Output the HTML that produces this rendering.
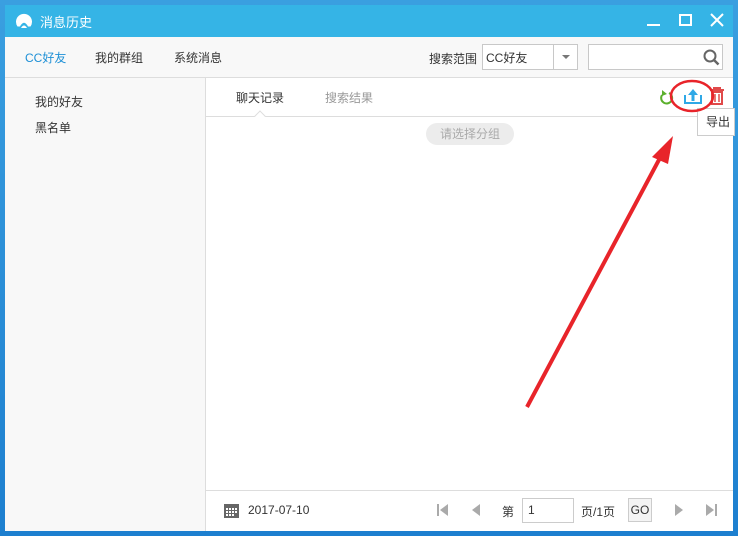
<!DOCTYPE html>
<html><head><meta charset="utf-8"><style>
*{margin:0;padding:0;box-sizing:border-box}
body{width:738px;height:536px;position:relative;overflow:hidden;background:#2a8fd6;font-family:"Liberation Sans","Noto Sans CJK SC",sans-serif;font-size:12px;color:#333}
.a{position:absolute}
</style></head><body>
<div class="a" style="left:0;top:0;width:738px;height:536px;background:linear-gradient(#3a9fe0,#1d7fcf)"></div>
<div class="a" style="left:5px;top:5px;width:728px;height:526px;background:#35b4e6"></div>
<!-- title -->
<svg class="a" style="left:14px;top:11px" width="20" height="20" viewBox="0 0 20 20"><path d="M3.5 15.5 A8 8 0 1 1 16.5 15.5 L14 15.5 Q10 8 6 15.5Z" fill="#fff"/><path d="M7 17 Q10 12 13 17Z" fill="#fff"/></svg>
<div class="a" style="left:40px;top:12px;color:#fff;font-size:13px">消息历史</div>
<div class="a" style="left:647px;top:24px;width:13px;height:2px;background:#fff"></div>
<div class="a" style="left:679px;top:14px;width:13px;height:12px;border:2px solid #fff"></div>
<svg class="a" style="left:710px;top:13px" width="14" height="14"><path d="M1 1L13 13M13 1L1 13" stroke="#fff" stroke-width="2"/></svg>
<!-- nav -->
<div class="a" style="left:5px;top:37px;width:728px;height:494px;background:#f8f8f8"></div>
<div class="a" style="left:25px;top:49px;color:#1e90d6">CC好友</div>
<div class="a" style="left:95px;top:49px">我的群组</div>
<div class="a" style="left:174px;top:49px">系统消息</div>
<div class="a" style="left:429px;top:50px">搜索范围</div>
<div class="a" style="left:482px;top:44px;width:96px;height:26px;border:1px solid #c8c8c8;background:#fff"></div>
<div class="a" style="left:486px;top:49px">CC好友</div>
<div class="a" style="left:553px;top:45px;width:1px;height:24px;background:#c8c8c8"></div>
<div class="a" style="left:562px;top:55px;border:4px solid transparent;border-top:4px solid #777"></div>
<div class="a" style="left:588px;top:44px;width:135px;height:26px;border:1px solid #c8c8c8;background:#fff"></div>
<svg class="a" style="left:703px;top:49px" width="17" height="17"><circle cx="7" cy="7" r="5.5" fill="none" stroke="#666" stroke-width="2"/><path d="M11 11L15.5 15.5" stroke="#666" stroke-width="2.5"/></svg>
<div class="a" style="left:5px;top:77px;width:728px;height:1px;background:#ddd"></div>
<!-- left -->
<div class="a" style="left:35px;top:93px">我的好友</div>
<div class="a" style="left:35px;top:119px">黑名单</div>
<div class="a" style="left:205px;top:78px;width:1px;height:453px;background:#ddd"></div>
<!-- right -->
<div class="a" style="left:206px;top:78px;width:527px;height:453px;background:#fff"></div>
<div class="a" style="left:236px;top:89px">聊天记录</div>
<div class="a" style="left:325px;top:89px;color:#999">搜索结果</div>
<div class="a" style="left:206px;top:116px;width:527px;height:1px;background:#ddd"></div>
<div class="a" style="left:256px;top:112px;width:8px;height:8px;background:#fff;border-left:1px solid #ddd;border-top:1px solid #ddd;transform:rotate(45deg)"></div>
<div class="a" style="left:426px;top:123px;width:88px;height:22px;border-radius:11px;background:#ececec;color:#aaa;text-align:center;line-height:22px">请选择分组</div>
<svg class="a" style="left:658px;top:86px" width="16" height="20"><path d="M11 7A5.5 5.5 0 1 1 4 9" fill="none" stroke="#5bb02c" stroke-width="2"/><path d="M4 4L4 10L9 8Z" fill="#5bb02c"/></svg>
<svg class="a" style="left:683px;top:86px" width="20" height="20"><path d="M2 9V17H18V9" fill="none" stroke="#2fa8e6" stroke-width="2"/><path d="M10 15V7" stroke="#2fa8e6" stroke-width="3"/><path d="M5 9L10 3L15 9Z" fill="#2fa8e6"/></svg>
<svg class="a" style="left:709px;top:86px" width="16" height="20"><path d="M1 4H15M5 4V2H11V4M3 6H13V18H3Z" fill="none" stroke="#e04a4a" stroke-width="2"/><path d="M6 8V16M10 8V16" stroke="#e04a4a" stroke-width="1.5"/></svg>
<div class="a" style="left:697px;top:108px;width:38px;height:28px;background:#fff;border:1px solid #ccc;line-height:26px;padding-left:8px">导出</div>
<!-- footer -->
<div class="a" style="left:206px;top:490px;width:527px;height:1px;background:#ddd"></div>
<svg class="a" style="left:223px;top:502px" width="17" height="16"><rect x="1" y="2" width="15" height="14" fill="#666"/><g fill="#fff"><rect x="3" y="6" width="2" height="2"/><rect x="6" y="6" width="2" height="2"/><rect x="9" y="6" width="2" height="2"/><rect x="12" y="6" width="2" height="2"/><rect x="3" y="9" width="2" height="2"/><rect x="6" y="9" width="2" height="2"/><rect x="9" y="9" width="2" height="2"/><rect x="12" y="9" width="2" height="2"/><rect x="3" y="12" width="2" height="2"/><rect x="6" y="12" width="2" height="2"/><rect x="9" y="12" width="2" height="2"/></g></svg>
<div class="a" style="left:248px;top:503px">2017-07-10</div>
<svg class="a" style="left:437px;top:503px" width="12" height="14"><path d="M1 1V13" stroke="#aaa" stroke-width="2"/><path d="M11 1L3 7L11 13Z" fill="#aaa"/></svg>
<svg class="a" style="left:470px;top:503px" width="12" height="14"><path d="M10 1L2 7L10 13Z" fill="#aaa"/></svg>
<div class="a" style="left:502px;top:503px">第</div>
<div class="a" style="left:522px;top:498px;width:52px;height:25px;border:1px solid #ccc;padding:4px 0 0 5px">1</div>
<div class="a" style="left:581px;top:503px">页/1页</div>
<div class="a" style="left:628px;top:498px;width:24px;height:24px;border:1px solid #ccc;background:#f4f4f4;text-align:center;line-height:22px">GO</div>
<svg class="a" style="left:673px;top:503px" width="12" height="14"><path d="M2 1L10 7L2 13Z" fill="#aaa"/></svg>
<svg class="a" style="left:705px;top:503px" width="12" height="14"><path d="M1 1L9 7L1 13Z" fill="#aaa"/><path d="M11 1V13" stroke="#aaa" stroke-width="2"/></svg>
<!-- annotation -->
<svg class="a" style="left:0;top:0" width="738" height="536"><ellipse cx="692" cy="96" rx="21" ry="15" fill="none" stroke="#e8242a" stroke-width="2.5"/><path d="M527 407L661 156" stroke="#e8242a" stroke-width="4"/><path d="M673 136L652 157L668 164Z" fill="#e8242a"/></svg>
</body></html>
